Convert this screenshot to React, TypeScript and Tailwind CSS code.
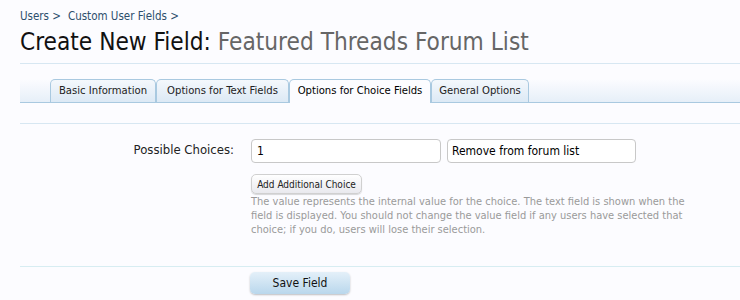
const tabs = [
  { label: 'Basic Information', w: 'w-[106px]', active: false },
  { label: 'Options for Text Fields', w: 'w-[133px]', active: false },
  { label: 'Options for Choice Fields', w: 'w-[142px]', active: true },
  { label: 'General Options', w: 'w-[98px]', active: false },
]

export default function App() {
  return (
    <div className="h-[300px] w-[740px] overflow-hidden bg-[#fcfcff] font-['DejaVu_Sans_Condensed','DejaVu_Sans',sans-serif] text-black">
      <div className="pl-[20px] pt-[8px]">
        {/* Breadcrumb */}
        <div className="flex h-[16px] items-center gap-[7px] text-[11.5px] leading-[16px] text-[#2d4f6c]">
          <span>Users &gt;</span>
          <span>Custom User Fields &gt;</span>
        </div>

        {/* Title */}
        <h1 className="mt-[4px] border-b border-[#d7e7f2] pb-[7px] text-[24.2px] leading-[28px]">
          <span className="text-[#111]">Create New Field: </span>
          <span className="text-[#666]">Featured Threads Forum List</span>
        </h1>

        {/* Tabs */}
        <div className="mt-[15px] flex h-[24px] items-end border-b border-[#a9c9e0] bg-gradient-to-b from-[#fcfcff] to-[#e6eff8] pl-[30px]">
          {tabs.map((t) => (
            <div
              key={t.label}
              className={
                t.active
                  ? `${t.w} -mb-px flex h-[24px] items-center justify-center rounded-t-[5px] border border-b-0 border-[#a9c9e0] bg-[#fcfcff] text-[11.2px]`
                  : `${t.w} flex h-[23px] items-center justify-center rounded-t-[5px] border border-b-0 border-[#a9c9e0] bg-gradient-to-b from-[#f4f8fc] to-[#dce9f5] text-[11.2px] text-[#222]`
              }
            >
              {t.label}
            </div>
          ))}
        </div>

        {/* Form */}
        <div className="mt-[20px] border-t border-[#d7e7f2] pt-[15px]">
          <div className="flex">
            <div className="w-[214px] pt-[3px] text-right text-[13px] leading-[16px] text-[#222]">Possible Choices:</div>
            <div className="ml-[17px] flex flex-col">
              <div className="flex gap-[6px]">
                <div className="flex h-[24px] w-[190px] items-center rounded-[4px] border border-[#c8c8c8] bg-white pl-[5px] text-[12px]">1</div>
                <div className="flex h-[24px] w-[189px] items-center rounded-[4px] border border-[#c8c8c8] bg-white pl-[4px] text-[12px]">Remove from forum list</div>
              </div>
              <button className="mt-[11px] flex h-[20px] w-[111px] items-center justify-center rounded-[5px] border border-[#d0d0d0] bg-gradient-to-b from-[#ffffff] to-[#e9e9ee] text-[10px] text-[#222] shadow-[0_1px_1px_rgba(0,0,0,0.15)]">
                Add Additional Choice
              </button>
              <p className="mt-[1px] w-[442px] text-[11px] leading-[14px] text-[#9a9a9a]">
                The value represents the internal value for the choice. The text field is shown when the field is displayed. You should not change the value field if any users have selected that choice; if you do, users will lose their selection.
              </p>
            </div>
          </div>
        </div>

        {/* Submit */}
        <div className="mt-[29px] border-t border-[#d7edf2] pl-[230px] pt-[5px]">
          <button className="flex h-[22px] w-[100px] items-center justify-center rounded-[5px] bg-gradient-to-b from-[#e4f0f9] to-[#b9d7ec] text-[12px] text-[#111] shadow-[0_1px_2px_rgba(0,0,0,0.25)]">
            Save Field
          </button>
        </div>
      </div>
    </div>
  )
}
